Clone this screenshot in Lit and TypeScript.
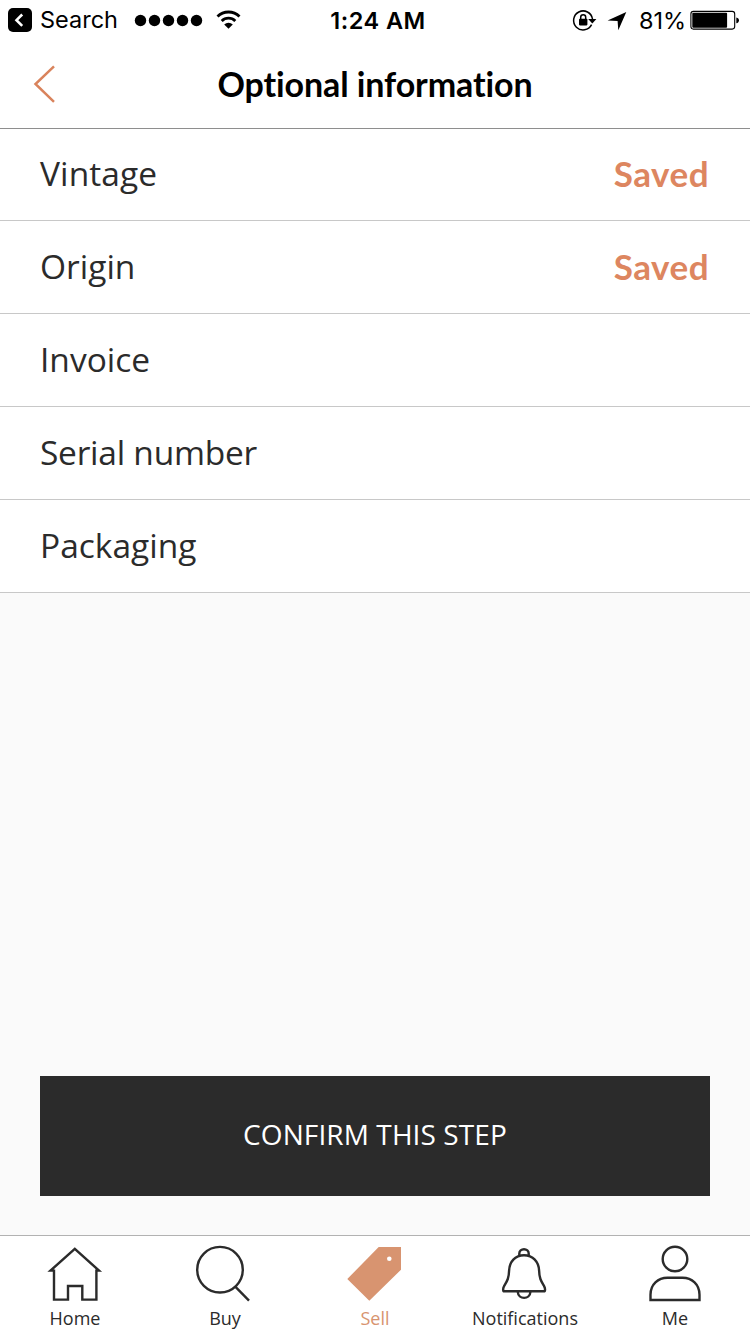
import { LitElement, html, svg, css } from "lit";
import { customElement, property } from "lit/decorators.js";
import { classMap } from "lit/directives/class-map.js";

@customElement("status-bar")
class StatusBar extends LitElement {
  static styles = css`
    :host { display: grid; grid-template-columns: 1fr auto 1fr; align-items: center; height: 40px; color: #000;
      font: 400 23.5px/28px Inter, sans-serif; }
    svg { display: block; flex: none; }
    .side { display: flex; align-items: center; }
    .left { padding-left: 8px; }
    .back { width: 94px; padding-left: 8px; box-sizing: border-box; margin-right: 8px; }
    .wifi { margin-left: 12px; }
    .time { font-weight: 600; letter-spacing: 0.5px; padding: 1px 0 0 6px; }
    .right { justify-content: flex-end; padding-right: 10px; }
    .loc { margin-left: 9px; }
    .pct { width: 51px; margin-left: 12px; padding-top: 1px; }
  `;
  render() {
    return html`
      <div class="side left">
        <svg width="24" height="24" viewBox="0 0 24 24"><rect width="24" height="24" rx="5" /><path d="M14.2 6.5 8.5 12.2l5.7 5.7" fill="none" stroke="#fff" stroke-width="2.6" /></svg>
        <span class="back">Search</span>
        <svg width="70" height="24" viewBox="0 0 70 24">${[6.5, 20.5, 34.5, 48.5, 62.5].map((x) => svg`<circle cx=${x} cy="12.5" r="5.7" />`)}</svg>
        <svg class="wifi" width="25" height="24" viewBox="0 0 25 24">
          <g fill="none" stroke="#000" stroke-width="2.8"><path d="M1.5 8.6a15.5 15.5 0 0 1 22 0" /><path d="M5.7 13a9.6 9.6 0 0 1 13.6 0" /></g>
          <path d="M12.5 20.8 8.2 16.4a6.2 6.2 0 0 1 8.6 0z" />
        </svg>
      </div>
      <div class="time">1:24 AM</div>
      <div class="side right">
        <svg width="26" height="24" viewBox="0 0 26 24">
          <path d="M19.6 16.7A9.5 9.5 0 1 1 20.5 11" fill="none" stroke="#000" stroke-width="1.5" />
          <path d="M16.2 11H24.400L20.3 15.400z" />
          <rect x="7" y="10.800" width="8.4" height="6.6" rx=".8" /><path d="M8.7 11.5V9.3a2.5 2.5 0 0 1 5 0v2.2" fill="none" stroke="#000" stroke-width="1.5" />
        </svg>
        <svg class="loc" width="20" height="24" viewBox="0 0 20 24"><path d="M.6 12.600 19.3 4 11.3 22.300 10.600 13z" /></svg>
        <span class="pct">81%</span>
        <svg width="50" height="24" viewBox="0 0 50 24"><rect x=".9" y="3.4" width="43.8" height="17.7" rx="2.5" fill="none" stroke="#000" stroke-width="1.1" /><rect x="2.3" y="4.8" width="34.8" height="14.9" rx="1" /><path d="M46.3 9.4c3.6.6 3.6 5.2 0 5.8z" /></svg>
      </div>`;
  }
}

@customElement("info-row")
class InfoRow extends LitElement {
  @property() label = "";
  @property() status = "";
  @property({ type: Number }) tracking = 0;
  static styles = css`
    :host { display: flex; align-items: center; justify-content: space-between; box-sizing: border-box; height: 93px;
      padding: 0 41px 3px 40px; background: #fff; border-bottom: 1px solid #c8c8c8; }
    .label { font: 400 33.5px/46px "Open Sans", sans-serif; color: #2b2b2b; }
    .status { font: 700 35px/46px Lato, sans-serif; letter-spacing: 0.5px; color: #dd8660; }
  `;
  render() {
    return html`<span class="label" style="letter-spacing:${this.tracking}px">${this.label}</span>
      ${this.status ? html`<span class="status">${this.status}</span>` : ""}`;
  }
}

const ICONS = {
  home: svg`<path d="M50.5 34.6H54V63.6H68V50H82.3V63.6H96.4V34.6H99L74.8 12.8z" />`,
  buy: svg`<circle cx="70" cy="33.7" r="22.8" /><path d="M85.5 50.8 99 64.6" />`,
  sell: svg`<path class="tag" fill-rule="evenodd" d="M78.7 11H101V33.7L69.3 64.7 47.3 43zM89.3 20.4a2.3 2.3 0 1 0 0 4.6 2.3 2.3 0 1 0 0-4.6z" />`,
  bell: svg`<path d="M74 19.3c-9 0-14.5 6.5-14.9 15.2-.2 8-2.1 10.7-5 15.7-1.3 2.3-1.3 5.1.2 5.1H93.9c1.5 0 1.5-2.8.2-5.1-2.9-5-4.8-7.7-5-15.7C88.7 25.8 83 19.3 74 19.3z" /><path d="M69.3 19.4v-2a4.7 4.2 0 0 1 9.4 0v2M67.8 56c.4 7.8 12.2 7.8 12.6 0" />`,
  me: svg`<circle cx="75" cy="23" r="12.3" /><path d="M50.5 64V58.7C50.5 48.5 58 41.7 67.5 41.7h15c9.5 0 17 6.8 17 17V64z" />`,
};

@customElement("tab-bar")
class TabBar extends LitElement {
  static styles = css`
    :host { display: grid; grid-template-columns: repeat(5, 1fr); height: 98px; border-top: 1px solid #b2b2b2; background: #fff; }
    .tab { display: flex; flex-direction: column; align-items: center; gap: 4px; color: #2b2b2b;
      font: 400 18px/24px "Open Sans", sans-serif; }
    .active { color: #d89470; }
    svg { display: block; fill: none; stroke: currentColor; stroke-width: 2.4; }
    .tag { fill: currentColor; stroke: none; }
  `;
  tabs = [
    { name: "Home", icon: ICONS.home },
    { name: "Buy", icon: ICONS.buy },
    { name: "Sell", icon: ICONS.sell, active: true },
    { name: "Notifications", icon: ICONS.bell },
    { name: "Me", icon: ICONS.me },
  ];
  render() {
    return this.tabs.map((t) => html`<div class=${classMap({ tab: true, active: !!t.active })}>
      <svg width="150" height="66" viewBox="0 0 150 66">${t.icon}</svg><span>${t.name}</span></div>`);
  }
}

@customElement("app-root")
export class AppRoot extends LitElement {
  static styles = css`
    :host { display: flex; flex-direction: column; height: 1334px; background: #fafafa; }
    .top { background: #fff; border-bottom: 1px solid #8e8e8e; }
    .nav { display: grid; grid-template-columns: 80px 1fr 80px; align-items: center; height: 88px; }
    .nav svg { display: block; margin-left: 32px; }
    h1 { margin: 0; padding-bottom: 1px; text-align: center; font: 700 34px/42px Lato, sans-serif; letter-spacing: -0.1px; color: #000; }
    .first { height: 92px; padding-bottom: 4px; }
    main { flex: 1; display: flex; flex-direction: column; }
    button { margin: auto 40px 39px; height: 120px; border: 0; padding: 0 0 4px; background: #2b2b2b; color: #fff;
      font: 400 28px/36px "Open Sans", sans-serif; letter-spacing: 0.1px; }
  `;
  rows = [
    { label: "Vintage", status: "Saved", tracking: 0.1 },
    { label: "Origin", status: "Saved", tracking: 0 },
    { label: "Invoice", status: "", tracking: 0 },
    { label: "Serial number", status: "", tracking: -0.25 },
    { label: "Packaging", status: "", tracking: 0 },
  ];
  render() {
    return html`
      <div class="top">
        <status-bar></status-bar>
        <div class="nav">
          <svg width="26" height="40" viewBox="0 0 26 40"><path d="M22 2.3 3.5 20 22 37.8" fill="none" stroke="#d9835c" stroke-width="2.5" /></svg>
          <h1>Optional information</h1>
        </div>
      </div>
      <main>
        ${this.rows.map((r, i) => html`<info-row class=${i === 0 ? "first" : ""} .label=${r.label} .status=${r.status} .tracking=${r.tracking}></info-row>`)}
        <button>CONFIRM THIS STEP</button>
      </main>
      <tab-bar></tab-bar>`;
  }
}
